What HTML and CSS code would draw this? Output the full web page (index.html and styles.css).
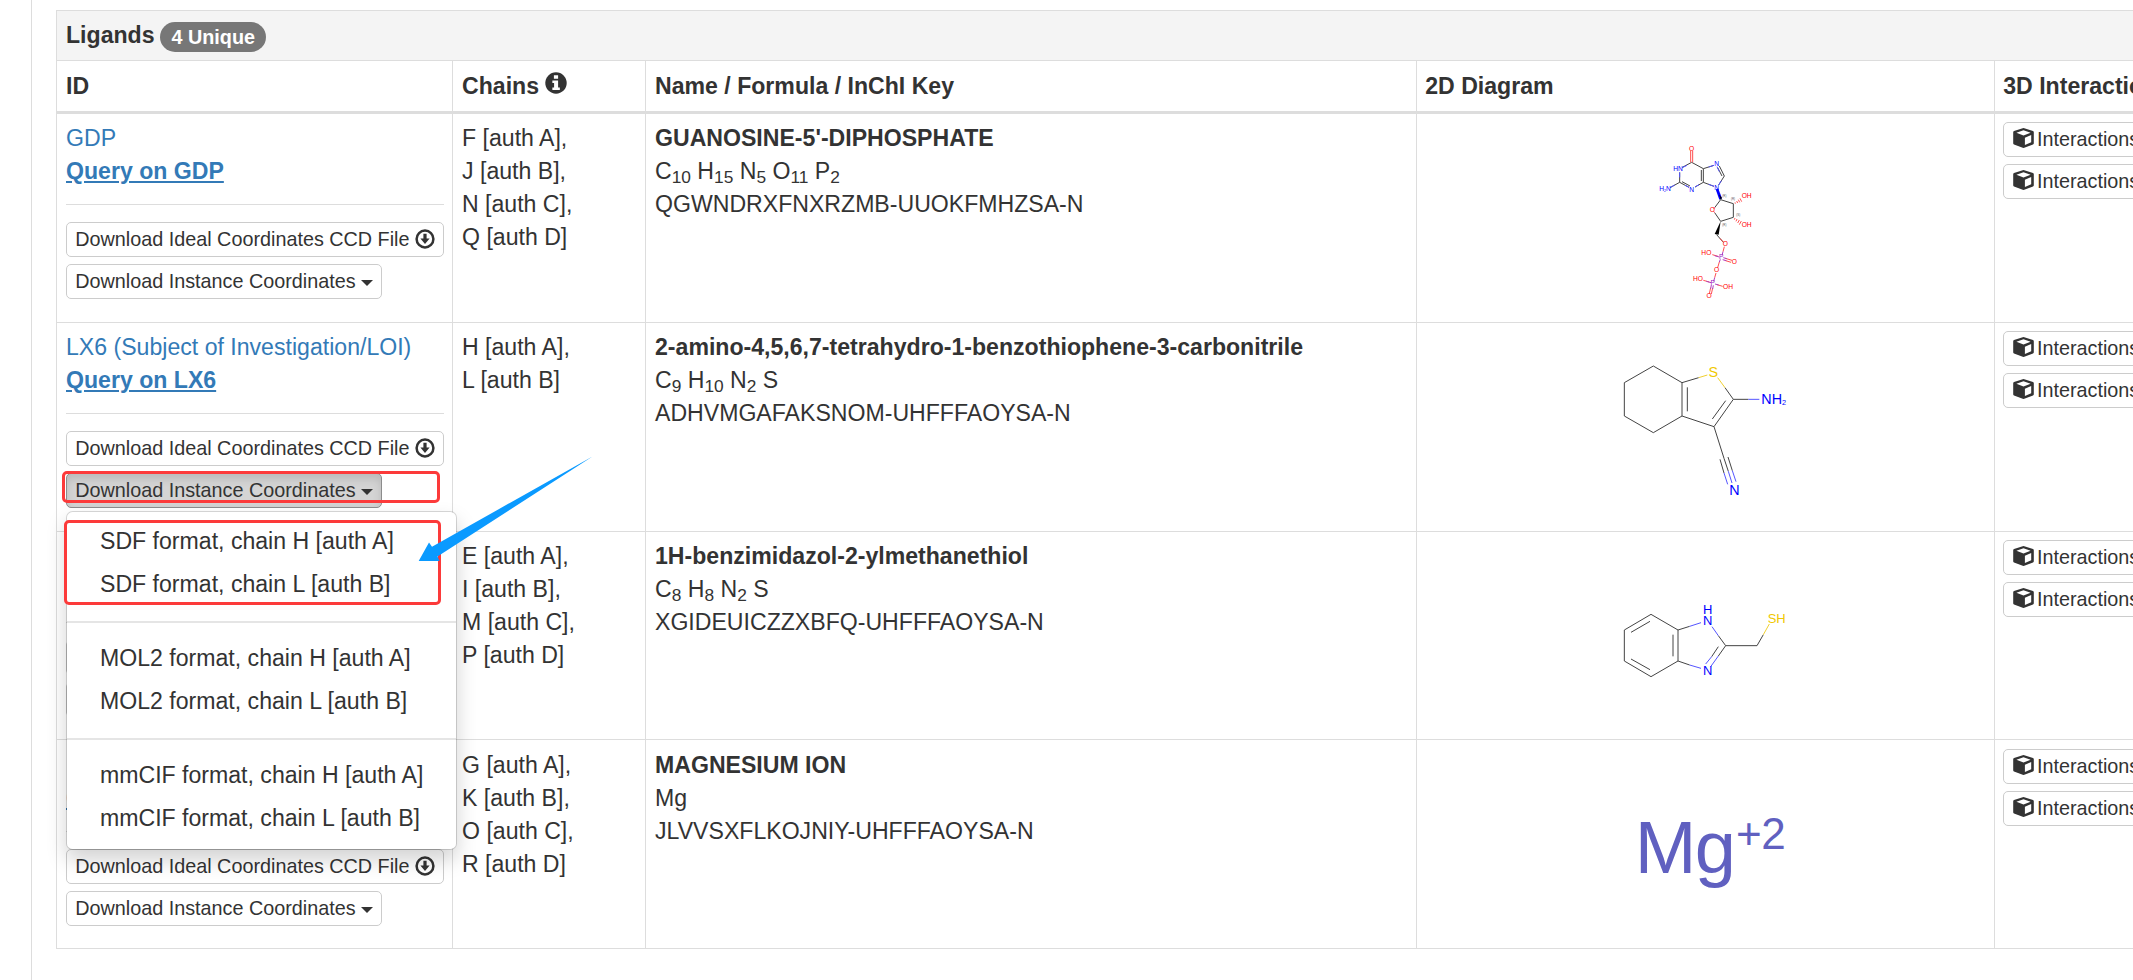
FILE: index.html
```
<!DOCTYPE html>
<html lang="en">
<head>
    <meta charset="UTF-8">
    <meta name="viewport" content="width=device-width, initial-scale=1.0">
    <title>Ligands</title>
    <link rel="stylesheet" href="styles.css">
</head>
<body>

    <!-- Shared icons -->
    <svg class="icon-defs" aria-hidden="true">
        <symbol id="icon-download" viewBox="0 0 20 20">
            <circle cx="10" cy="10" r="8.4" fill="none" stroke="#333" stroke-width="2.5"/>
            <path d="M8.4 4.8h3.2v4.700h3L10 15 5.400 9.500h3z" fill="#333"/>
        </symbol>
        <symbol id="icon-cube" viewBox="0 0 21 20">
            <path fill="#333" fill-rule="evenodd" d="M10.500 0 20 3q.8.400.8 1.200v11q0 .9-.8 1.300L11.300 19.800q-.8.300-1.600 0L1 16.500q-.8-.4-.8-1.300v-11Q.2 3.400 1 3zM10.500 2.300 3.400 4.700l7.100 2.800 7.100-2.800zM11.900 9.700v7.200l6.300-2.700V7.100z"/>
        </symbol>
    </svg>

    <div class="panel">
        <table class="ligand-table">
            <colgroup>
                <col class="col-id">
                <col class="col-chains">
                <col class="col-name">
                <col class="col-diagram">
                <col class="col-3d">
            </colgroup>
            <thead>
                <tr class="title-row">
                    <th colspan="5">Ligands <span class="badge">4 Unique</span></th>
                </tr>
                <tr class="head-row">
                    <th>ID</th>
                    <th>Chains
                        <svg class="info-icon" viewBox="0 0 23 23"><circle cx="11.500" cy="11.500" r="11.200" fill="#333"/><path d="M9.300 3.300h4.400v3.800H9.300zM7.700 8.800h6v7.300h1.800v2.800H7.700v-2.800h1.800v-4.500H7.700z" fill="#fff"/></svg>
                    </th>
                    <th>Name / Formula / InChI Key</th>
                    <th>2D Diagram</th>
                    <th>3D Interactions</th>
                </tr>
            </thead>
            <tbody>
                <!-- GDP -->
                <tr>
                    <td>
                        <a href="#">GDP</a><br>
                        <a class="query" href="#">Query on GDP</a>
                        <hr>
                        <div class="actions">
                            <button class="btn">Download Ideal Coordinates CCD File <svg class="dl-icon"><use href="#icon-download"/></svg></button>
                            <button class="btn">Download Instance Coordinates <span class="caret"></span></button>
                        </div>
                    </td>
                    <td>F [auth A],<br>J [auth B],<br>N [auth C],<br>Q [auth D]</td>
                    <td><strong>GUANOSINE-5'-DIPHOSPHATE</strong><br>C<sub>10</sub> H<sub>15</sub> N<sub>5</sub> O<sub>11</sub> P<sub>2</sub><br>QGWNDRXFNXRZMB-UUOKFMHZSA-N</td>
                    <td class="diagram">
                        <svg width="220" height="180" viewBox="0 0 660 540" class="mol mol-small">
                            <g class="bond">
                                <path d="M275 97 310 116V157L285 171M267 172 239 157M275 97 247 112M239 157V127M304 120V153M310 116 342 106M310 157 342 169M358 108 373 138 356 165M353 113 366 138M239 157 210 173M246 155 270 168"/>
                                <path d="M362 209 400 221V262L362 274 344 248M362 209 344 233M350 314 370 337"/>
                            </g>
                            <path class="bond-o" d="M272 97V63M278 97V63M344 248 341 244M344 233 341 237M360 325 371 337M373 350 369 365M358 396 353 413M337 374 354 379M376 385 396 391M374 391 393 397M348 429 344 443M310 451 328 456M351 464 368 469M332 473 328 491M338 474 334 492"/>
                            <path class="bond-p" d="M369 365 366 376M361 388 358 396M344 377 358 381M370 383 380 386M368 389 379 392M344 443 341 454M319 454 333 458M345 462 356 465M334 465 332 476M340 466 338 477"/>
                            <path class="bond-n" d="M239 142V127M261 106 247 113M267 172 255 166M285 171 297 164M326 111 342 106M326 163 342 169M351 110 358 125M356 165 364 152M224 165 210 173"/>
                            <path d="M347 178 355 176 366 205 358 209z" fill="#00f"/>
                            <path d="M357 193 362 209 366 204z" fill="#000"/>
                            <path d="M362 274 356 314 344 312z" fill="#000"/>
                            <path class="hash" d="M405 217 406 221M410 213 413 219M415 209 419 217M420 205 425 215M405 264 403 269M411 267 408 274M418 270 413 279M424 273 418 284"/>
                            <g class="lbl">
                                <g fill="#f00">
                                    <text x="275" y="62">O</text><text x="337" y="247">O</text><text x="440" y="205">OH</text><text x="440" y="292">OH</text>
                                    <text x="376" y="349">O</text><text x="319" y="375">HO</text><text x="403" y="403">O</text><text x="350" y="426">O</text>
                                    <text x="294" y="453">HO</text><text x="384" y="477">OH</text><text x="327" y="505">O</text>
                                </g>
                                <g fill="#00f">
                                    <text x="234" y="124">HN</text><text x="350" y="109">N</text><text x="275" y="185">N</text><text x="350" y="179">N</text>
                                    <text x="195" y="184">H<tspan font-size="11" dy="2">2</tspan><tspan dy="-2">N</tspan></text>
                                </g>
                                <g fill="#a020c0"><text x="364" y="388">P</text><text x="338" y="466">P</text></g>
                                <g fill="#555" font-size="9" class="stereo"><text x="373" y="201">(R)</text><text x="399" y="210">(R)</text><text x="415" y="258">(S)</text><text x="373" y="288">(R)</text></g>
                            </g>
                        </svg>
                    </td>
                    <td><div class="actions"><button class="btn"><svg class="cube-icon"><use href="#icon-cube"/></svg> Interactions</button><button class="btn"><svg class="cube-icon"><use href="#icon-cube"/></svg> Interactions</button></div></td>
                </tr>

                <!-- LX6 -->
                <tr>
                    <td>
                        <a href="#">LX6 (Subject of Investigation/LOI)</a><br>
                        <a class="query" href="#">Query on LX6</a>
                        <hr>
                        <div class="actions">
                            <button class="btn">Download Ideal Coordinates CCD File <svg class="dl-icon"><use href="#icon-download"/></svg></button>
                            <div class="dropdown">
                                <button class="btn active">Download Instance Coordinates <span class="caret"></span></button>
                                <ul class="dropdown-menu">
                                    <li>SDF format, chain H [auth A]</li>
                                    <li>SDF format, chain L [auth B]</li>
                                    <li class="divider"></li>
                                    <li>MOL2 format, chain H [auth A]</li>
                                    <li>MOL2 format, chain L [auth B]</li>
                                    <li class="divider"></li>
                                    <li>mmCIF format, chain H [auth A]</li>
                                    <li>mmCIF format, chain L [auth B]</li>
                                </ul>
                            </div>
                        </div>
                    </td>
                    <td>H [auth A],<br>L [auth B]</td>
                    <td><strong>2-amino-4,5,6,7-tetrahydro-1-benzothiophene-3-carbonitrile</strong><br>C<sub>9</sub> H<sub>10</sub> N<sub>2</sub> S<br>ADHVMGAFAKSNOM-UHFFFAOYSA-N</td>
                    <td class="diagram">
                        <svg width="230" height="170" viewBox="0 0 690 510" class="mol mol-lx6">
                            <path class="bond" d="M276 98 190 48 103 98V198L190 248 276 198zM292 112V184M276 98 326 83M276 198 372 230 430 148 405 113M367 207 407 152M430 148H475M372 230 402 325M402 325 415 364M390 328 402 369M414 321 427 362"/>
                            <path class="bond-s" d="M326 83 352 75M405 113 383 83"/>
                            <path class="bond-n" d="M475 148H508M415 364 426 399M402 369 413 403M427 362 438 395"/>
                            <g class="lbl" font-size="43">
                                <text x="370" y="81" fill="#f0c800">S</text>
                                <text x="514" y="162" fill="#00f" text-anchor="start">NH<tspan font-size="22" dy="3">2</tspan></text>
                                <text x="433" y="435" fill="#00f">N</text>
                            </g>
                        </svg>
                    </td>
                    <td><div class="actions"><button class="btn"><svg class="cube-icon"><use href="#icon-cube"/></svg> Interactions</button><button class="btn"><svg class="cube-icon"><use href="#icon-cube"/></svg> Interactions</button></div></td>
                </tr>

                <!-- 1H-benzimidazol-2-ylmethanethiol, left cell sits behind the open menu -->
                <tr class="short-row">
                    <td>
                        <br>
                        <br>
                        <hr>
                        <div class="actions">
                            <button class="btn btn-wide"></button>
                            <button class="btn btn-wide"></button>
                        </div>
                    </td>
                    <td>E [auth A],<br>I [auth B],<br>M [auth C],<br>P [auth D]</td>
                    <td><strong>1H-benzimidazol-2-ylmethanethiol</strong><br>C<sub>8</sub> H<sub>8</sub> N<sub>2</sub> S<br>XGIDEUICZZXBFQ-UHFFFAOYSA-N</td>
                    <td class="diagram">
                        <svg width="230" height="110" viewBox="0 0 690 330" class="mol mol-bzi">
                            <path class="bond" d="M264 120 183 73 103 120V213L183 260 264 213zM249 134V199M180 94 123 127M123 207 180 239M264 120 299 109M264 213 299 225M407 167 385 137M407 167 385 198M385 170 365 200M407 167H501L520 134"/>
                            <path class="bond-n" d="M299 109 333 98M299 225 333 235M385 137 366 110M385 198 362 230M365 200 347 222"/>
                            <path class="bond-s" d="M520 134 538 102"/>
                            <g class="lbl" font-size="39">
                                <text x="353" y="71" fill="#00f">H</text>
                                <text x="353" y="104" fill="#00f">N</text>
                                <text x="353" y="254" fill="#00f">N</text>
                                <text x="560" y="98" fill="#f0c800">SH</text>
                            </g>
                        </svg>
                    </td>
                    <td><div class="actions"><button class="btn"><svg class="cube-icon"><use href="#icon-cube"/></svg> Interactions</button><button class="btn"><svg class="cube-icon"><use href="#icon-cube"/></svg> Interactions</button></div></td>
                </tr>

                <!-- Magnesium -->
                <tr class="last-row">
                    <td>
                        <br>
                        <a class="query" href="#">Query on MG</a>
                        <hr>
                        <div class="actions">
                            <button class="btn">Download Ideal Coordinates CCD File <svg class="dl-icon"><use href="#icon-download"/></svg></button>
                            <button class="btn">Download Instance Coordinates <span class="caret"></span></button>
                        </div>
                    </td>
                    <td>G [auth A],<br>K [auth B],<br>O [auth C],<br>R [auth D]</td>
                    <td><strong>MAGNESIUM ION</strong><br>Mg<br>JLVVSXFLKOJNIY-UHFFFAOYSA-N</td>
                    <td class="diagram">
                        <svg width="240" height="140" viewBox="0 0 720 420" class="mol mol-mg">
                            <g fill="#6060c0">
                                <text x="134" y="279" font-size="222" textLength="304">Mg</text>
                                <text x="438" y="207" font-size="132" textLength="149">+2</text>
                            </g>
                        </svg>
                    </td>
                    <td><div class="actions"><button class="btn"><svg class="cube-icon"><use href="#icon-cube"/></svg> Interactions</button><button class="btn"><svg class="cube-icon"><use href="#icon-cube"/></svg> Interactions</button></div></td>
                </tr>
            </tbody>
        </table>
    </div>

    <!-- Annotations on top of the page -->
    <div class="mark mark-button"></div>
    <div class="mark mark-sdf"></div>
    <svg class="arrow" width="180" height="110" viewBox="0 0 180 110">
        <path d="M3.700 110.900 14 92.500 17 96.700 177.500 6.500 22.500 106.500 24.500 110.900z" fill="#0a9aff"/>
    </svg>

</body>
</html>
```
FILE: styles.css
```
* {
    box-sizing: border-box;
}

body {
    margin: 0;
    height: 980px;
    overflow: hidden;
    position: relative;
    font-family: "Liberation Sans", Arial, sans-serif;
    font-size: 23.1px;
    line-height: 33px;
    color: #333;
    background-color: #fff;
}

.icon-defs {
    display: none;
}

.panel {
    height: 980px;
    margin-left: 31px;
    padding: 10px 0 0 24px;
    border-left: 1px solid #ddd;
    overflow: hidden;
}

/* Table */
.ligand-table {
    width: 2239px;
    table-layout: fixed;
    border-collapse: separate;
    border-spacing: 0;
    border-left: 1px solid #ddd;
    border-top: 1px solid #ddd;
}

.col-id { width: 396px; }
.col-chains { width: 193px; }
.col-name { width: 771px; }
.col-diagram { width: 578px; }
.col-3d { width: 300px; }

th,
td {
    padding: 8px 8.25px 0;
    text-align: left;
    vertical-align: top;
    white-space: nowrap;
    border-right: 1px solid #ddd;
    border-bottom: 1px solid #ddd;
}

th:nth-child(-n+3),
td:nth-child(-n+3) {
    padding-left: 9px;
    padding-right: 8px;
}

.title-row th {
    height: 50px;
    background-color: #f4f4f4;
}

.head-row th {
    height: 53px;
    padding-top: 9px;
    border-bottom-width: 3px;
}

tbody tr {
    height: 209px;
}

tbody .short-row {
    height: 208px;
}

.last-row td {
    padding-top: 9px;
}

.badge {
    display: inline-block;
    padding: 5px 11.5px;
    font-size: 19.8px;
    line-height: 20px;
    color: #fff;
    vertical-align: middle;
    background-color: #777;
    border-radius: 16.5px;
}

.title-row .badge {
    margin-left: -1px;
}

.info-icon {
    width: 22px;
    height: 22px;
    vertical-align: 0;
}

a {
    color: #337ab7;
    text-decoration: none;
}

.query {
    font-weight: bold;
    text-decoration: underline;
}

hr {
    margin: 16px 0 17px;
    border: 0;
    border-top: 1px solid #ddd;
}

sub {
    position: relative;
    bottom: -0.25em;
    font-size: 75%;
    line-height: 0;
    vertical-align: baseline;
}

/* Buttons */
.actions {
    display: flex;
    flex-direction: column;
    align-items: flex-start;
    gap: 7px;
}

.btn {
    display: block;
    height: 35px;
    padding: 0 8.25px;
    font-family: inherit;
    font-size: 19.8px;
    line-height: 33px;
    color: #333;
    white-space: nowrap;
    background-color: #fff;
    border: 1px solid #ccc;
    border-radius: 5px;
}

.btn-wide {
    width: 316px;
}

.btn.active {
    background-color: #d4d4d4;
    border-color: #8c8c8c;
    box-shadow: inset 0 5px 8px rgba(0, 0, 0, 0.125);
}

.dl-icon {
    width: 20px;
    height: 20px;
    vertical-align: -3px;
}

.cube-icon {
    width: 21px;
    height: 20px;
    margin: 0 -2px 0 0;
    vertical-align: -2px;
}

.caret {
    display: inline-block;
    vertical-align: middle;
    border-top: 6px solid #333;
    border-left: 6px solid transparent;
    border-right: 6px solid transparent;
}

/* Dropdown */
.dropdown {
    position: relative;
}

.dropdown-menu {
    position: absolute;
    top: 100%;
    left: 0;
    z-index: 10;
    width: 391px;
    margin: 3px 0 0;
    padding: 8.25px 0;
    list-style: none;
    background-color: #fff;
    background-clip: padding-box;
    border: 1px solid rgba(0, 0, 0, 0.15);
    border-radius: 6.6px;
    box-shadow: 0 10px 20px rgba(0, 0, 0, 0.175);
}

.dropdown-menu li {
    padding: 5px 33px;
}

.dropdown-menu .divider {
    height: 2px;
    margin: 14.5px 0;
    padding: 0;
    background-color: #e5e5e5;
}

/* 2D diagrams */
td.diagram {
    padding: 0;
}

.mol {
    display: block;
    overflow: visible;
}

.mol-small { margin: 16px 0 0 183px; }
.mol-lx6 { margin: 27px 0 0 173px; }
.mol-bzi { margin: 58px 0 0 173px; }
.mol-mg { margin: 40px 0 0 173px; }

.mol path {
    stroke-width: 3;
}

.bond,
.bond-n,
.bond-s,
.bond-o,
.bond-p {
    fill: none;
}

.bond { stroke: #444; }
.bond-n { stroke: #5555ff; }
.bond-s { stroke: #f0d030; }
.bond-o { stroke: #ff5050; }
.bond-p { stroke: #b040c0; }
.hash { stroke: #f55; }

.lbl {
    text-anchor: middle;
}

.mol-small .lbl {
    font-size: 20px;
}

/* Annotations */
.mark {
    position: absolute;
    z-index: 20;
    border: 3px solid #fc3a3a;
    border-radius: 5px;
}

.mark-button {
    left: 62px;
    top: 471px;
    width: 378px;
    height: 32px;
}

.mark-sdf {
    left: 64px;
    top: 520px;
    width: 377px;
    height: 85px;
}

.arrow {
    position: absolute;
    left: 415px;
    top: 450px;
    z-index: 21;
    overflow: visible;
}
```
